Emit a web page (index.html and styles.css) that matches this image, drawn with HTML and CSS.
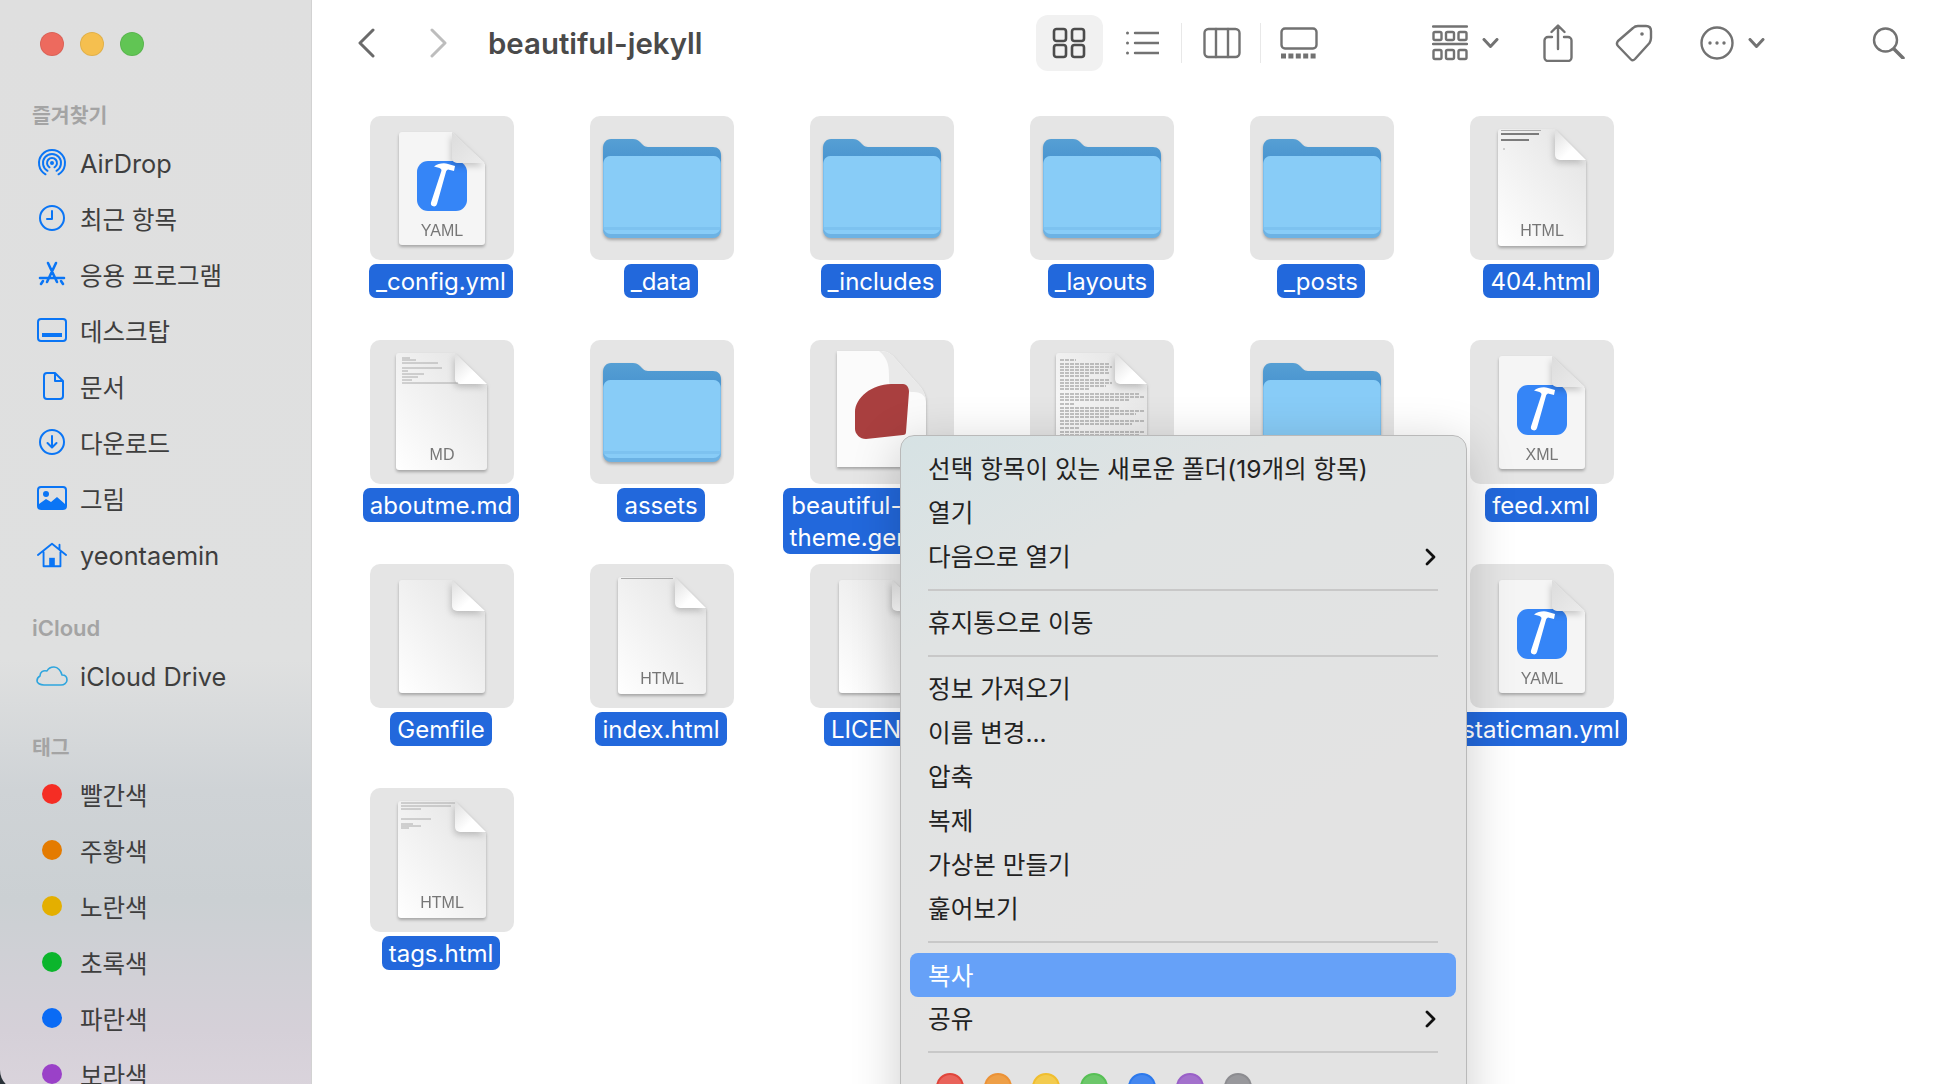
FILE: index.html
```html
<!DOCTYPE html>
<html lang="ko">
  <head>
    <meta charset="UTF-8" />
    <title>beautiful-jekyll</title>
    <link rel="stylesheet" href="styles.css">
  </head>
  <body>
    <svg class="defs" width="0" height="0">
      <defs>
        <linearGradient id="docFill" x1="1" y1="0" x2="0" y2="1">
          <stop offset="0" stop-color="#e2e2e2" />
          <stop offset="1" stop-color="#ffffff" />
        </linearGradient>
        <linearGradient id="foldFill" x1="0" y1="0" x2="1" y2="1">
          <stop offset="0" stop-color="#dedede" />
          <stop offset=".6" stop-color="#ffffff" />
        </linearGradient>
        <linearGradient id="paleFold" x1="0" y1="0" x2="1" y2="1">
          <stop offset="0" stop-color="#dcdcdc" />
          <stop offset="1" stop-color="#ececec" />
        </linearGradient>
        <linearGradient id="folderBack" x1="0" y1="0" x2="0" y2="1">
          <stop offset="0" stop-color="#569fd4" />
          <stop offset="1" stop-color="#3c8acb" />
        </linearGradient>
        <symbol id="folder" viewBox="0 0 144 144">
          <path fill="url(#folderBack)" d="M13 32c0-5 3-9 8-9h22c3 0 5 1 7 3l3 3c1 1 3 2 5 2h65c5 0 8 3 8 8v30H13z" />
          <rect x="13" y="40" width="118" height="82" rx="8" fill="#6cb2e4" />
          <rect x="13.5" y="40" width="117" height="78" rx="7" fill="#88ccf7" />
          <path fill="#7dc2f0" d="M13.5 111h117v3h-117z" />
        </symbol>
        <symbol id="doc-sm" viewBox="0 0 144 144">
          <path fill="url(#docFill)" d="M32 16h50l33 32v78a3 3 0 0 1-3 3H32a3 3 0 0 1-3-3V19a3 3 0 0 1 3-3z" />
          <path class="fold" fill="url(#foldFill)" d="M82 16l33 31H87a5 5 0 0 1-5-5z" />
        </symbol>
        <symbol id="doc" viewBox="0 0 144 144">
          <path fill="url(#docFill)" d="M31 13h54l31 32v82a3 3 0 0 1-3 3H31a3 3 0 0 1-3-3V16a3 3 0 0 1 3-3z" />
          <path class="fold" fill="url(#foldFill)" d="M85 13l31 31H90a5 5 0 0 1-5-5z" />
        </symbol>
        <symbol id="doc-wd" viewBox="0 0 144 144">
          <path fill="url(#docFill)" d="M29 13h56l32 32v82a3 3 0 0 1-3 3H29a3 3 0 0 1-3-3V16a3 3 0 0 1 3-3z" />
          <path class="fold" fill="url(#foldFill)" d="M85 13l32 31H90a5 5 0 0 1-5-5z" />
        </symbol>
        <symbol id="doc-tool" viewBox="0 0 144 144">
          <path fill="#f5f5f5" d="M32 16h50l33 32v78a3 3 0 0 1-3 3H32a3 3 0 0 1-3-3V19a3 3 0 0 1 3-3z" />
          <rect x="47" y="45" width="50" height="50" rx="11" fill="#3585f7" />
          <path class="fold" fill="url(#paleFold)" d="M82 16l33 31H87a5 5 0 0 1-5-5z" />
          <path fill="#fff" d="M72 53l4.500 1L67 88a3 3 0 0 1-6-1.500z" />
          <path fill="#fff" d="M64 50.500C68 47.500 74 46.500 78 48L85 50L84 55L78 53.500L73 57L71 53C69 51.500 66.500 51 64 50.500z" />
        </symbol>
        <symbol id="doc-gem" viewBox="0 0 144 144">
          <path fill="#fbfbfb" d="M27 11h43c6 0 10 2 14 6l22 25c6 6 10 12 10 20v65H27z" />
          <path fill="#e9e9e9" d="M69 11c7 0 11 2 15 6l22 25c6 6 10 12 10 20 0-6-5-10-12-10-6 0-8-1-12-1-11 0-13-3-13-13 0-10 0-19-10-27z" />
          <path fill="#a93f3f" d="M99 52l-3 40c0 2-1 3-3 3l-37 4c-6 0-11-5-11-10V72c0-14 17-28 36-28h12c4 0 6 4 6 8z" />
        </symbol>
      </defs>
    </svg>

    <div class="window">
      <aside class="sidebar">
        <div class="lights">
          <span class="light red"></span>
          <span class="light yellow"></span>
          <span class="light green"></span>
        </div>

        <h3 class="side-title first">즐겨찾기</h3>
        <a class="side-row latin">
          <svg class="side-icon" viewBox="0 0 28 28"><circle cx="14" cy="14" r="2" class="solid" /><path d="M7.500 25.300A13 13 0 1 1 20.500 25.300M9.500 21.800A9 9 0 1 1 18.500 21.800M11.500 18.300A5 5 0 1 1 16.500 18.300" /></svg>
          AirDrop
        </a>
        <a class="side-row">
          <svg class="side-icon" viewBox="0 0 28 28"><circle cx="14" cy="14" r="12" /><path d="M14 7v8H9" /></svg>
          최근 항목
        </a>
        <a class="side-row">
          <svg class="side-icon" viewBox="0 0 28 28"><path class="thick" d="M18 3L9 22M10 3l9 19M2 18h24M3 24l2-3M25 24l-2-3" /></svg>
          응용 프로그램
        </a>
        <a class="side-row">
          <svg class="side-icon" viewBox="0 0 30 24"><rect x="1" y="1" width="28" height="22" rx="3" /><rect x="5" y="15" width="20" height="4" class="solid" /></svg>
          데스크탑
        </a>
        <a class="side-row">
          <svg class="side-icon" viewBox="0 0 28 28"><path d="M6 4a3 3 0 0 1 3-3h8l8 8v15a3 3 0 0 1-3 3H9a3 3 0 0 1-3-3zM17 1v8h8" /></svg>
          문서
        </a>
        <a class="side-row">
          <svg class="side-icon" viewBox="0 0 28 28"><circle cx="14" cy="14" r="12" /><path d="M14 8v11M9.500 15l4.500 4.500 4.500-4.500" /></svg>
          다운로드
        </a>
        <a class="side-row">
          <svg class="side-icon" viewBox="0 0 30 24"><rect x="1" y="1" width="28" height="22" rx="3" /><circle cx="9" cy="8" r="3" class="solid" /><path class="solid" d="M2 18l7-5 5 3 6-5 8 7v5H2z" /></svg>
          그림
        </a>
        <a class="side-row latin">
          <svg class="side-icon" viewBox="0 0 32 28"><path d="M1 14L16 2l15 12M7 11v15h18V11M24 3v5" /><rect x="13" y="17" width="6" height="9" class="solid" /></svg>
          yeontaemin
        </a>

        <h3 class="side-title section-icloud">iCloud</h3>
        <a class="side-row latin first-row">
          <svg class="side-icon cloud" viewBox="0 0 32 20"><path d="M8 19h17c3 0 6-2 6-5s-2-5-5-5c-1-4-4-8-8-8s-6 2-7 4c-4-1-7 1-7 5-2 1-3 3-3 5 0 2 3 4 7 4z" /></svg>
          iCloud Drive
        </a>

        <h3 class="side-title section-tags">태그</h3>
        <a class="side-row tag-first"><span class="tag-dot tag-red"></span>빨간색</a>
        <a class="side-row"><span class="tag-dot tag-orange"></span>주황색</a>
        <a class="side-row"><span class="tag-dot tag-yellow"></span>노란색</a>
        <a class="side-row"><span class="tag-dot tag-green"></span>초록색</a>
        <a class="side-row"><span class="tag-dot tag-blue"></span>파란색</a>
        <a class="side-row"><span class="tag-dot tag-purple"></span>보라색</a>
      </aside>

      <main class="main">
        <header class="toolbar">
          <svg class="nav-icon" viewBox="0 0 18 30"><path d="M16 2L3 15l13 13" /></svg>
          <svg class="nav-icon forward" viewBox="0 0 18 30"><path d="M2 2l13 13L2 28" /></svg>
          <h1 class="title">beautiful-jekyll</h1>

          <div class="views">
            <button class="tb-btn selected">
              <svg width="34" height="32" viewBox="0 0 34 32"><rect x="2" y="2" width="12" height="12" rx="2.500" /><rect x="20" y="2" width="12" height="12" rx="2.500" /><rect x="2" y="18" width="12" height="12" rx="2.500" /><rect x="20" y="18" width="12" height="12" rx="2.500" /></svg>
            </button>
            <button class="tb-btn wide">
              <svg width="34" height="28" viewBox="0 0 34 28"><path d="M10 4h24M10 14h24M10 24h24" /><circle cx="2.500" cy="4" r="1.500" /><circle cx="2.500" cy="14" r="1.500" /><circle cx="2.500" cy="24" r="1.500" /></svg>
            </button>
            <span class="tb-sep"></span>
            <button class="tb-btn wide columns-btn">
              <svg width="38" height="32" viewBox="0 0 38 32"><rect x="1.500" y="2" width="35" height="28" rx="4" /><path d="M13 2v28M25 2v28" /></svg>
            </button>
            <span class="tb-sep"></span>
            <button class="tb-btn gallery-btn">
              <svg width="38" height="32" viewBox="0 0 38 32"><rect x="1.500" y="1.500" width="35" height="20" rx="3.500" /><path class="dash" d="M1 29h36" /></svg>
            </button>
          </div>

          <button class="tb-btn group-btn">
            <svg width="36" height="36" viewBox="0 0 36 36"><path d="M1 1.500h34M1 19h34" /><rect x="1.500" y="7" width="8" height="8" rx="1.500" /><rect x="14" y="7" width="8" height="8" rx="1.500" /><rect x="26.500" y="7" width="8" height="8" rx="1.500" /><rect x="1.500" y="25" width="8" height="9" rx="1.500" /><rect x="14" y="25" width="8" height="9" rx="1.500" /><rect x="26.500" y="25" width="8" height="9" rx="1.500" /></svg>
            <svg class="drop" width="17" height="10" viewBox="0 0 17 10"><path d="M2 1.500l6.500 7 6.500-7" /></svg>
          </button>
          <button class="tb-btn share-btn">
            <svg width="30" height="38" viewBox="0 0 30 38"><path d="M9 13H5a3.500 3.500 0 0 0-3.500 3.500v17A3.500 3.500 0 0 0 5 37h20a3.500 3.500 0 0 0 3.500-3.500v-17A3.500 3.500 0 0 0 25 13h-4M15 25V2M8.500 8L15 1.500 21.500 8" /></svg>
          </button>
          <button class="tb-btn tag-btn">
            <svg width="38" height="38" viewBox="0 0 38 38"><path d="M23 2h8c3 0 5 2 5 5v7c0 2-.5 3-1.500 5L20 35c-1.500 1.500-3 1.500-4 .5L3 22c-1.500-1.500-1.500-3 0-5L18 4c1.500-1.500 3-2 5-2z" /><circle class="mark" cx="27" cy="10" r="1.800" /></svg>
          </button>
          <button class="tb-btn more-btn">
            <svg width="34" height="34" viewBox="0 0 34 34"><circle cx="17" cy="17" r="15.500" /><circle class="mark" cx="10" cy="17" r="1.700" /><circle class="mark" cx="17" cy="17" r="1.700" /><circle class="mark" cx="24" cy="17" r="1.700" /></svg>
            <svg class="drop" width="17" height="10" viewBox="0 0 17 10"><path d="M2 1.500l6.500 7 6.500-7" /></svg>
          </button>
          <button class="tb-btn search-btn">
            <svg width="34" height="32" viewBox="0 0 34 32"><circle cx="13.500" cy="13" r="11.500" /><path class="heavy" d="M22 22l9 9" /></svg>
          </button>
        </header>

        <section class="grid">
          <div class="file">
            <div class="tile"><svg class="art" viewBox="0 0 144 144"><use href="#doc-tool" /><text class="ext" x="72" y="120">YAML</text></svg></div>
            <span class="name">_config.yml</span>
          </div>
          <div class="file">
            <div class="tile"><svg class="art" viewBox="0 0 144 144"><use href="#folder" /></svg></div>
            <span class="name">_data</span>
          </div>
          <div class="file">
            <div class="tile"><svg class="art" viewBox="0 0 144 144"><use href="#folder" /></svg></div>
            <span class="name">_includes</span>
          </div>
          <div class="file">
            <div class="tile"><svg class="art" viewBox="0 0 144 144"><use href="#folder" /></svg></div>
            <span class="name">_layouts</span>
          </div>
          <div class="file">
            <div class="tile"><svg class="art" viewBox="0 0 144 144"><use href="#folder" /></svg></div>
            <span class="name">_posts</span>
          </div>
          <div class="file">
            <div class="tile"><svg class="art" viewBox="0 0 144 144"><use href="#doc" /><path class="thumb dark" d="M31 18h38M31 24h28" /><path class="thumb" d="M31 14.500h40M33 33h2" /><text class="ext" x="72" y="120">HTML</text></svg></div>
            <span class="name">404.html</span>
          </div>

          <div class="file">
            <div class="tile"><svg class="art" viewBox="0 0 144 144"><use href="#doc-wd" /><path class="thumb" d="M32 18h8M32 20h14M32 23h36M32 28h40M32 31h6M32 34h22M32 37h16M32 40h10M32 43h56" /><text class="ext" x="72" y="120">MD</text></svg></div>
            <span class="name">aboutme.md</span>
          </div>
          <div class="file">
            <div class="tile"><svg class="art" viewBox="0 0 144 144"><use href="#folder" /></svg></div>
            <span class="name">assets</span>
          </div>
          <div class="file">
            <div class="tile"><svg class="art" viewBox="0 0 144 144"><use href="#doc-gem" /></svg></div>
            <span class="name">beautiful-jekyll-<br>theme.gemspec</span>
          </div>
          <div class="file">
            <div class="tile"><svg class="art" viewBox="0 0 144 144"><use href="#doc-wd" /><path class="text-lines" d="M30 20h16M30 24h50M30 27h52M30 30h48M30 33h50M30 36h30M30 40h50M30 43h52M30 46h46M30 49h30M30 54h80M30 57h84M30 60h70M30 64h14M30 68h60M30 71h84M30 74h76M30 77h50M30 81h84M30 84h72M30 88h20M30 92h84M30 95h80M30 98h70M30 101h84M30 104h50" /></svg></div>
            <span class="name">CHANGELOG.md</span>
          </div>
          <div class="file">
            <div class="tile"><svg class="art" viewBox="0 0 144 144"><use href="#folder" /></svg></div>
            <span class="name">docs</span>
          </div>
          <div class="file">
            <div class="tile"><svg class="art" viewBox="0 0 144 144"><use href="#doc-tool" /><text class="ext" x="72" y="120">XML</text></svg></div>
            <span class="name">feed.xml</span>
          </div>

          <div class="file">
            <div class="tile"><svg class="art" viewBox="0 0 144 144"><use href="#doc-sm" /></svg></div>
            <span class="name">Gemfile</span>
          </div>
          <div class="file">
            <div class="tile"><svg class="art" viewBox="0 0 144 144"><use href="#doc" /><path class="thumb" d="M31 14.500h52" /><text class="ext" x="72" y="120">HTML</text></svg></div>
            <span class="name">index.html</span>
          </div>
          <div class="file">
            <div class="tile"><svg class="art" viewBox="0 0 144 144"><use href="#doc-sm" /></svg></div>
            <span class="name">LICENSE</span>
          </div>
          <div class="file">
            <div class="tile"><svg class="art" viewBox="0 0 144 144"><use href="#doc-sm" /></svg></div>
            <span class="name">README.md</span>
          </div>
          <div class="file">
            <div class="tile"><svg class="art" viewBox="0 0 144 144"><use href="#doc-sm" /></svg></div>
            <span class="name">screenshot.png</span>
          </div>
          <div class="file">
            <div class="tile"><svg class="art" viewBox="0 0 144 144"><use href="#doc-tool" /><text class="ext" x="72" y="120">YAML</text></svg></div>
            <span class="name">staticman.yml</span>
          </div>

          <div class="file">
            <div class="tile"><svg class="art" viewBox="0 0 144 144"><use href="#doc" /><path class="thumb" d="M31 15h54M31 18h50M31 21h20M31 31h30M31 36h12M31 38h20M31 40h8" /><text class="ext" x="72" y="120">HTML</text></svg></div>
            <span class="name">tags.html</span>
          </div>
        </section>

        <div class="menu">
          <div class="menu-item">선택 항목이 있는 새로운 폴더(19개의 항목)</div>
          <div class="menu-item">열기</div>
          <div class="menu-item">다음으로 열기
            <svg class="chev" viewBox="0 0 12 18"><path d="M2 2l7 7-7 7" /></svg>
          </div>
          <hr class="menu-sep" />
          <div class="menu-item">휴지통으로 이동</div>
          <hr class="menu-sep" />
          <div class="menu-item">정보 가져오기</div>
          <div class="menu-item">이름 변경...</div>
          <div class="menu-item">압축</div>
          <div class="menu-item">복제</div>
          <div class="menu-item">가상본 만들기</div>
          <div class="menu-item">훑어보기</div>
          <hr class="menu-sep" />
          <div class="menu-item active">복사</div>
          <div class="menu-item">공유
            <svg class="chev" viewBox="0 0 12 18"><path d="M2 2l7 7-7 7" /></svg>
          </div>
          <hr class="menu-sep" />
          <div class="menu-tags">
            <span class="menu-dot dot-red"></span>
            <span class="menu-dot dot-orange"></span>
            <span class="menu-dot dot-yellow"></span>
            <span class="menu-dot dot-green"></span>
            <span class="menu-dot dot-blue"></span>
            <span class="menu-dot dot-purple"></span>
            <span class="menu-dot dot-gray"></span>
          </div>
        </div>
      </main>
    </div>
  </body>
</html>
```

FILE: styles.css
```css
html,
body {
  margin: 0;
  padding: 0;
  height: 1084px;
  overflow: hidden;
  background-color: #fff;
  font-family: Inter, "Noto Sans CJK KR", sans-serif;
}
.defs {
  position: absolute;
}
.window {
  position: relative;
  display: flex;
  height: 1084px;
  overflow: hidden;
  background-color: #2a3238;
}

/* sidebar */
.sidebar {
  box-sizing: border-box;
  flex: 0 0 312px;
  height: 1090px;
  border-right: 1px solid #d2d2d2;
  border-bottom-left-radius: 20px;
  overflow: hidden;
  background: linear-gradient(
    180deg,
    #dfdfdf 0,
    #dfe0e0 660px,
    #cfd3d6 790px,
    #cbd0d3 900px,
    #d5d0d8 1030px,
    #dad4dc 1090px
  );
}
.lights {
  display: flex;
  gap: 16px;
  height: 88px;
  padding-left: 40px;
  align-items: center;
}
.light {
  box-sizing: border-box;
  width: 24px;
  height: 24px;
  border-radius: 50%;
  border: 1px solid rgba(0, 0, 0, 0.08);
}
.red {
  background-color: #ed6a5e;
}
.yellow {
  background-color: #f5bf4f;
}
.green {
  background-color: #61c554;
}
.side-title {
  margin: 0 0 7px 32px;
  height: 24px;
  line-height: 24px;
  font-size: 20.500px;
  font-weight: 600;
  color: #a4a4a4;
}
.side-title.first {
  margin-top: 16px;
  margin-bottom: 6px;
}
.section-icloud {
  margin-top: 34px;
  font-size: 22px;
}
.section-tags {
  margin-top: 33px;
}
.side-row {
  box-sizing: border-box;
  display: flex;
  align-items: center;
  height: 56px;
  font-size: 24.500px;
  color: #3e3e3e;
}
.side-row.latin {
  padding-top: 2px;
  font-size: 25.300px;
}
.first-row {
  margin-top: 1px;
}
.tag-first {
  margin-top: -1px;
}
.side-icon {
  flex: 0 0 auto;
  width: 30px;
  height: 28px;
  margin: 0 13px 0 37px;
  fill: none;
  stroke: #0a75f5;
  stroke-width: 2;
  stroke-linecap: round;
  stroke-linejoin: round;
}
.side-icon .solid {
  fill: #0a75f5;
  stroke: none;
}
.side-icon .thick {
  stroke-width: 2.600;
}
.side-icon.cloud {
  stroke: #2ea5de;
  stroke-width: 1.600;
  width: 32px;
  height: 22px;
  margin: 0 12px 0 36px;
}
.tag-dot {
  flex: 0 0 auto;
  width: 20px;
  height: 20px;
  margin: 0 18px 0 42px;
  border-radius: 50%;
}
.tag-red {
  background-color: #f52d24;
}
.tag-orange {
  background-color: #e47b00;
}
.tag-yellow {
  background-color: #e4af00;
}
.tag-green {
  background-color: #0bb52c;
}
.tag-blue {
  background-color: #0a6bf5;
}
.tag-purple {
  background-color: #9a41c8;
}

/* main area */
.main {
  flex: 1;
  background-color: #fff;
}
.toolbar {
  display: flex;
  align-items: center;
  height: 86px;
  padding-left: 45px;
}
.nav-icon {
  width: 18px;
  height: 30px;
  fill: none;
  stroke: #6a6a6a;
  stroke-width: 3;
  stroke-linecap: round;
  stroke-linejoin: round;
}
.nav-icon.forward {
  margin-left: 55px;
  stroke: #bdbdbd;
}
.title {
  margin: 0 0 0 40px;
  width: 548px;
  font-size: 29.400px;
  font-weight: 600;
  color: #4a4a4a;
}
.views {
  display: flex;
  align-items: center;
}
.tb-btn {
  display: flex;
  align-items: center;
  justify-content: center;
  width: 67px;
  height: 56px;
  padding: 0;
  border: none;
  background: none;
}
.tb-btn svg {
  fill: none;
  stroke: #727272;
  stroke-width: 2.400;
  stroke-linecap: round;
  stroke-linejoin: round;
}
.tb-btn .mark,
.tb-btn circle[r="1.500"] {
  fill: #727272;
  stroke: none;
}
.tb-btn .heavy {
  stroke-width: 3.500;
}
.tb-btn .dash {
  stroke-width: 5;
  stroke-dasharray: 5 2.400;
  stroke-linecap: butt;
}
.tb-btn.selected {
  border-radius: 12px;
  background-color: #f1f1f1;
}
.tb-btn.selected svg {
  stroke: #4c4c4c;
  stroke-width: 2.600;
  margin-right: 2px;
}
.tb-btn.wide {
  width: 78px;
}
.columns-btn {
  padding-left: 2px;
}
.gallery-btn {
  margin-left: 4px;
}
.tb-sep {
  width: 1px;
  height: 40px;
  background-color: #e8e8e8;
}
.tb-btn .drop {
  margin-left: 14px;
  stroke-width: 3;
}
.group-btn {
  width: 80px;
  margin-left: 93px;
}
.share-btn {
  width: 55px;
  margin-left: 25px;
}
.tag-btn {
  width: 56px;
  margin-left: 21px;
}
.more-btn {
  width: 85px;
  margin-left: 28px;
}
.search-btn {
  width: 56px;
  margin-left: 86px;
}
.grid {
  display: grid;
  grid-template-columns: repeat(6, 220px);
  grid-auto-rows: 224px;
  padding: 30px 0 0 20px;
}
.file {
  display: flex;
  flex-direction: column;
  align-items: center;
  gap: 4px;
}
.tile {
  width: 144px;
  height: 144px;
  border-radius: 10px;
  background-color: #e5e5e5;
}
.art {
  display: block;
  width: 144px;
  height: 144px;
  filter: drop-shadow(0 2px 1.500px rgba(0, 0, 0, 0.28));
}
.fold {
  filter: drop-shadow(-1px 3px 3px rgba(0, 0, 0, 0.2));
}
.ext {
  text-anchor: middle;
  font-family: "Liberation Sans", sans-serif;
  font-size: 16px;
  fill: #767676;
}
.thumb {
  fill: none;
  stroke: #9a9a9a;
  stroke-width: 0.800;
}
.thumb.dark {
  stroke: #555;
  stroke-width: 1.500;
}
.text-lines {
  fill: none;
  stroke: #8a8a8a;
  stroke-width: 1.200;
  stroke-dasharray: 4 1;
}
.name {
  margin-right: 2px;
  padding: 2px 7px 0;
  border-radius: 7px;
  background-color: #2268dc;
  color: #fff;
  font-size: 24px;
  line-height: 32px;
  text-align: center;
  white-space: nowrap;
}

/* context menu */
.menu {
  position: absolute;
  left: 900px;
  top: 435px;
  box-sizing: border-box;
  width: 567px;
  height: 700px;
  padding-top: 11px;
  border: 1px solid #b9b9b9;
  border-radius: 14px;
  background: linear-gradient(150deg, #d6e2e4 0, #e0e3e3 22%, #e3e3e3 60%);
  box-shadow: 0 10px 50px rgba(0, 0, 0, 0.2);
  font-size: 24.600px;
  color: #222;
}
.menu-item {
  box-sizing: border-box;
  display: flex;
  align-items: center;
  justify-content: space-between;
  height: 44px;
  padding: 0 27px 5px;
}
.menu-item.active {
  margin: 0 10px 0 9px;
  padding: 0 18px 3px;
  border-radius: 8px;
  background-color: #66a1f8;
  color: #fff;
}
.chev {
  width: 12px;
  height: 18px;
  margin: 5px 2px 0 0;
  fill: none;
  stroke: #111;
  stroke-width: 2.800;
  stroke-linecap: round;
  stroke-linejoin: round;
}
.menu-sep {
  height: 2px;
  margin: 10px 28px 10px 27px;
  border: none;
  background-color: #c8c8c8;
}
.menu-tags {
  display: flex;
  gap: 20px;
  margin: 20px 0 0 35px;
}
.menu-dot {
  box-sizing: border-box;
  width: 28px;
  height: 28px;
  border-radius: 50%;
  border: 2px solid;
}
.dot-red {
  background-color: #e9635a;
  border-color: #e0453b;
}
.dot-orange {
  background-color: #ee9f47;
  border-color: #ec9236;
}
.dot-yellow {
  background-color: #f3cb4e;
  border-color: #f0be2f;
}
.dot-green {
  background-color: #6cc76a;
  border-color: #57c055;
}
.dot-blue {
  background-color: #4487ef;
  border-color: #2c79ec;
}
.dot-purple {
  background-color: #a371cc;
  border-color: #9a60c8;
}
.dot-gray {
  background-color: #98989c;
  border-color: #8c8c90;
}
```
